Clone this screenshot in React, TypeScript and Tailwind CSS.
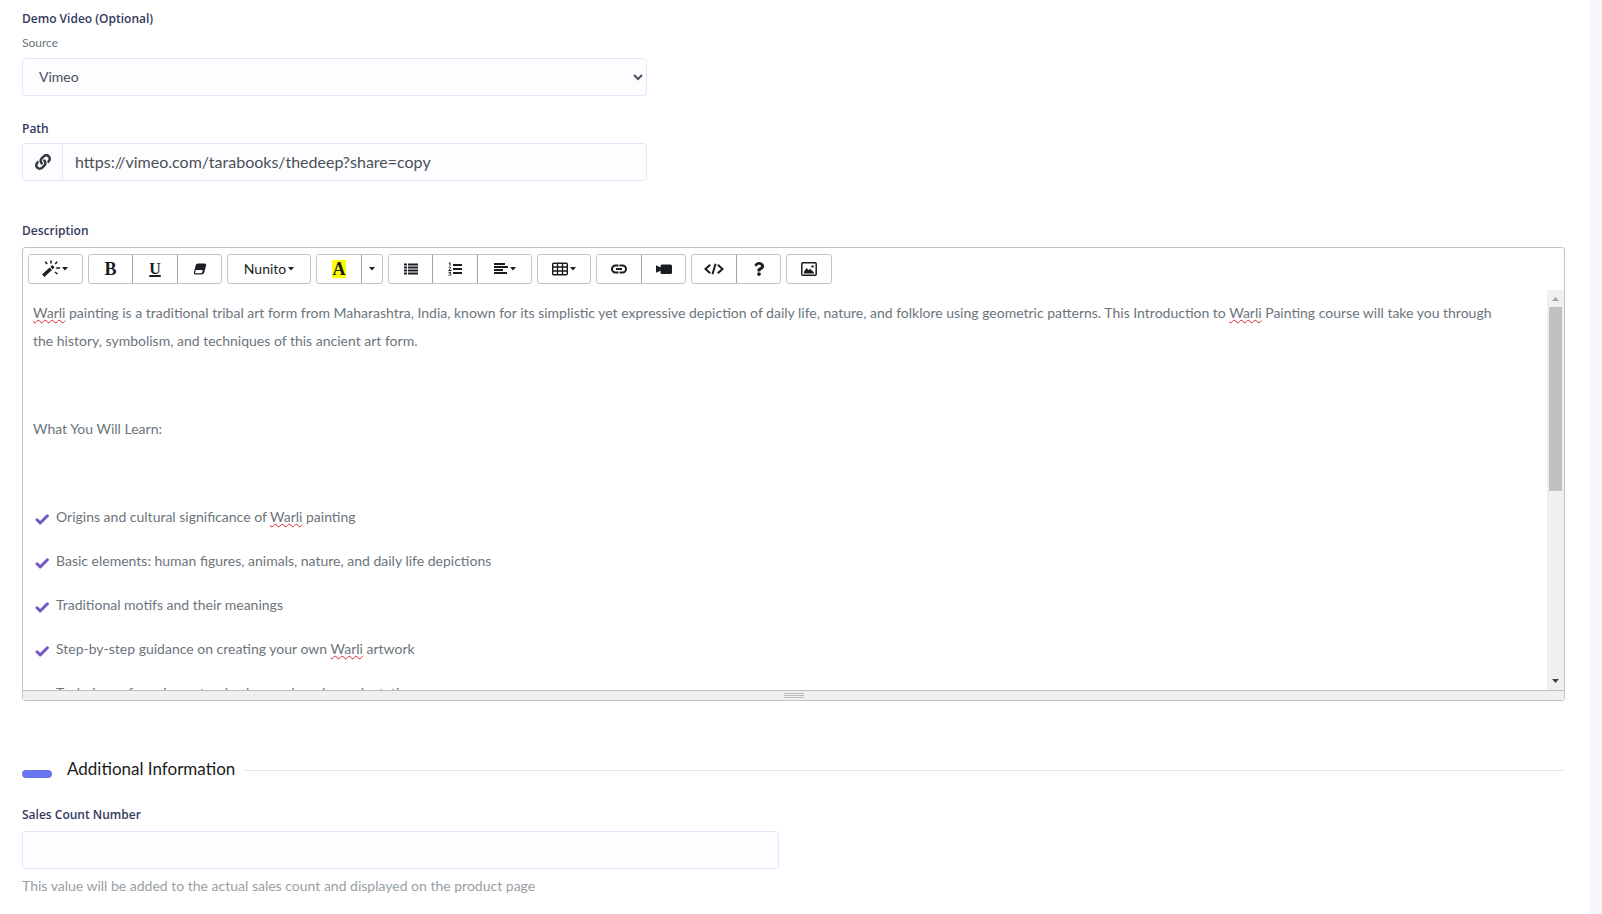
import { useState, type ReactNode } from "react";
import { FaLink, FaQuestion } from "react-icons/fa";

const learningPoints: ReactNode[] = [
  <>
    Origins and cultural significance of <Misspelled>Warli</Misspelled> painting
  </>,
  <>Basic elements: human figures, animals, nature, and daily life depictions</>,
  <>Traditional motifs and their meanings</>,
  <>
    Step-by-step guidance on creating your own <Misspelled>Warli</Misspelled> artwork
  </>,
  <>Techniques for using natural colors and modern adaptations</>,
];

function Misspelled({ children }: { children: ReactNode }) {
  return (
    <span className="underline decoration-[#d8232a] decoration-wavy decoration-1 underline-offset-1">
      {children}
    </span>
  );
}

function Caret() {
  return (
    <svg aria-hidden="true" className="h-1 w-1.5 shrink-0" viewBox="0 0 6 4">
      <path d="M0 0h6L3 3.5z" fill="currentColor" />
    </svg>
  );
}

function MagicIcon() {
  return (
    <svg aria-hidden="true" className="-ml-0.5 h-[18px] w-[18px]" viewBox="0 0 18 18" stroke="currentColor">
      <path d="m1.2 15.8 7.6-7" strokeWidth="3.4" />
      <path d="m9.6 8 1.8-1.7" strokeWidth="3.4" />
      <path
        d="M9 .5v3M3.2 1.8l2 2.2M15.2 1.8l-2 2.2M14.2 8H18M13 12l2.400 2"
        strokeWidth="1.6"
      />
    </svg>
  );
}

function EraserIcon() {
  return (
    <svg aria-hidden="true" className="h-3.5 w-3.5" viewBox="0 0 14 14" fill="currentColor">
      <path
        fillRule="evenodd"
        d="M5 1.5h6.4c1.3 0 2 .9 1.7 2l-1.8 6.8c-.3 1.3-1.3 2.2-2.5 2.2H2.6c-1.3 0-2-.9-1.7-2l1.7-6.8C3 2.4 3.9 1.5 5 1.5ZM2.8 8l-.7 2.7c-.1.3.1.6.5.6h5.6c.5 0 .8-.2.9-.7L9.8 8z"
      />
    </svg>
  );
}

function BulletListIcon() {
  return (
    <svg aria-hidden="true" className="h-3.5 w-3.5" viewBox="0 0 14 14" fill="currentColor">
      <path d="M0 1.5h3v2H0zM0 4.5h3v2H0zM0 7.5h3v2H0zM0 10.5h3v2H0zM4 1.5h10v2H4zM4 4.5h10v2H4zM4 7.5h10v2H4zM4 10.5h10v2H4z" />
    </svg>
  );
}

function NumberListIcon() {
  return (
    <svg aria-hidden="true" className="h-3.5 w-3.5" viewBox="0 0 14 14">
      <path d="M5 2h9v2H5zM5 6h9v2H5zM5 10h9v2H5z" fill="currentColor" />
      <path
        d="M.8 1.3 2 .7v3.4M.5 5.6c1.4-1 3 0 1.8 1.2L.7 8.5h2.600M.6 10.3h2.300L1.7 11.5c1.9 0 1.5 2-.1 1.9L.5 13"
        fill="none"
        stroke="currentColor"
      />
    </svg>
  );
}

function AlignIcon() {
  return (
    <svg aria-hidden="true" className="h-3 w-3.5" viewBox="0 0 14 12" fill="currentColor">
      <path d="M0 0h11v2H0zM0 3h14v2H0zM0 6h9v2H0zM0 9h13v2H0z" />
    </svg>
  );
}

function TableIcon() {
  return (
    <svg aria-hidden="true" className="h-3.5 w-4" viewBox="0 0 16 14">
      <rect x=".7" y="1.2" width="14.6" height="11.6" rx="1" fill="none" stroke="currentColor" strokeWidth="1.4" />
      <path d="M5.5 1v12M10.5 1v12M1 5h14M1 9h14" stroke="currentColor" strokeWidth="1.4" />
    </svg>
  );
}

function ChainIcon() {
  return (
    <svg aria-hidden="true" className="h-3 w-4" viewBox="0 0 16 12" fill="none" stroke="currentColor" strokeWidth="2">
      <path d="M7.5 2.5h-3a3.5 3.5 0 0 0 0 7h3M8.5 2.5h3a3.5 3.5 0 0 1 0 7h-3M5 6h6" />
    </svg>
  );
}

function VideoIcon() {
  return (
    <svg aria-hidden="true" className="h-3 w-4" viewBox="0 0 16 12" fill="currentColor">
      <path d="m0 2.2 5 2.6v2.6L0 9.8z" />
      <rect x="4.5" y="1.5" width="11.5" height="9.5" rx="1.5" />
    </svg>
  );
}

function CodeIcon() {
  return (
    <svg aria-hidden="true" className="h-3.5 w-5" viewBox="0 0 20 14" fill="none" stroke="currentColor" strokeWidth="2">
      <path d="M6.2 2.8 1.5 7l4.7 4.2M13.8 2.8 18.5 7l-4.7 4.2M11.6 1.8 8.4 12.2" />
    </svg>
  );
}

function PictureIcon() {
  return (
    <svg aria-hidden="true" className="h-3.5 w-4" viewBox="0 0 16 14">
      <rect x=".8" y=".8" width="14.4" height="12.4" rx="1" fill="none" stroke="currentColor" strokeWidth="1.5" />
      <path d="M3 11.5V9.8L5.6 6l2 2.3L9 6.8l3.9 3.5v1.2z" fill="currentColor" />
      <circle cx="11.6" cy="4.4" r="1.2" fill="currentColor" />
    </svg>
  );
}

function CheckIcon() {
  return (
    <svg aria-hidden="true" className="mt-1 ml-0.5 h-3.5 w-3.5 shrink-0" viewBox="0 0 14 14" fill="none">
      <path
        d="m2 7.8 3.2 3.2 7.2-7.2"
        stroke="#7159c1"
        strokeLinecap="round"
        strokeLinejoin="round"
        strokeWidth="3"
      />
    </svg>
  );
}

function ToolGroup({ children }: { children: ReactNode }) {
  return (
    <div className="flex divide-x divide-[#a3a3a3] rounded-[3px] border border-[#c4c4c4] bg-white">
      {children}
    </div>
  );
}

function Tool({
  label,
  className = "w-11",
  children,
}: {
  label: string;
  className?: string;
  children: ReactNode;
}) {
  return (
    <button
      aria-label={label}
      className={`box-content flex h-7 items-center justify-center gap-0.5 text-[#191d21] hover:bg-gray-100 ${className}`}
      type="button"
    >
      {children}
    </button>
  );
}

function Toolbar() {
  return (
    <div aria-label="Formatting" className="flex flex-wrap gap-[5px] px-[5px] py-1.5" role="toolbar">
      <ToolGroup>
        <Tool className="w-[53px]" label="Style">
          <MagicIcon />
          <Caret />
        </Tool>
      </ToolGroup>
      <ToolGroup>
        <Tool className="w-[43px]" label="Bold">
          <span className="font-['Liberation_Serif',serif] text-lg leading-5 font-bold">B</span>
        </Tool>
        <Tool label="Underline">
          <span className="font-['Liberation_Serif',serif] text-base leading-5 font-bold underline decoration-2 underline-offset-1">
            U
          </span>
        </Tool>
        <Tool className="w-[43px]" label="Remove Font Style">
          <EraserIcon />
        </Tool>
      </ToolGroup>
      <ToolGroup>
        <Tool className="w-[82px]" label="Font Family">
          <span className="text-sm">Nunito</span>
          <Caret />
        </Tool>
      </ToolGroup>
      <ToolGroup>
        <Tool label="Recent Color">
          <span className="flex h-[18px] w-3.5 items-center justify-center bg-[#ffff00] font-['Liberation_Serif',serif] text-lg font-bold">
            A
          </span>
        </Tool>
        <Tool className="w-5" label="More Color">
          <Caret />
        </Tool>
      </ToolGroup>
      <ToolGroup>
        <Tool className="w-[43px]" label="Unordered list">
          <BulletListIcon />
        </Tool>
        <Tool label="Ordered list">
          <NumberListIcon />
        </Tool>
        <Tool className="w-[53px]" label="Paragraph">
          <AlignIcon />
          <Caret />
        </Tool>
      </ToolGroup>
      <ToolGroup>
        <Tool className="w-[52px]" label="Table">
          <TableIcon />
          <Caret />
        </Tool>
      </ToolGroup>
      <ToolGroup>
        <Tool label="Link">
          <ChainIcon />
        </Tool>
        <Tool className="w-[43px]" label="Video">
          <VideoIcon />
        </Tool>
      </ToolGroup>
      <ToolGroup>
        <Tool label="Code View">
          <CodeIcon />
        </Tool>
        <Tool className="w-[43px]" label="Help">
          <FaQuestion className="size-3.5" />
        </Tool>
      </ToolGroup>
      <ToolGroup>
        <Tool label="File Manager">
          <PictureIcon />
        </Tool>
      </ToolGroup>
    </div>
  );
}

function ScrollTrack() {
  return (
    <div aria-hidden="true" className="flex w-[17px] shrink-0 flex-col items-center bg-[#f0f0f0]">
      <svg className="h-[17px] w-[17px] shrink-0" viewBox="0 0 17 17">
        <path d="M5 11h7L8.5 7z" fill="#a3a3a3" />
      </svg>
      <div className="h-[184px] w-[13px] bg-[#c1c1c1]" />
      <svg className="mt-auto h-[17px] w-[17px] shrink-0" viewBox="0 0 17 17">
        <path d="M5 6h7l-3.5 4z" fill="#424242" />
      </svg>
    </div>
  );
}

function Editor() {
  return (
    <div className="rounded-[3px] border border-[#c4c4c4]">
      <Toolbar />
      <div className="flex h-[400px]">
        <div
          aria-labelledby="description-label"
          aria-multiline="true"
          className="min-w-0 flex-1 space-y-4 overflow-hidden px-2.5 pt-[9px] text-sm leading-7 text-[#6c757d] outline-none"
          contentEditable
          role="textbox"
          spellCheck={false}
          suppressContentEditableWarning
        >
          <p>
            <Misspelled>Warli</Misspelled> painting is a traditional tribal art form from Maharashtra, India, known
            for its simplistic yet expressive depiction of daily life, nature, and folklore using geometric patterns.
            This Introduction to <Misspelled>Warli</Misspelled> Painting course will take you through
            <br />
            the history, symbolism, and techniques of this ancient art form.
          </p>
          <p>
            <br />
          </p>
          <p>What You Will Learn:</p>
          <p>
            <br />
          </p>
          {learningPoints.map((point, index) => (
            <p className="flex items-center gap-[7px]" key={index}>
              <CheckIcon />
              <span>{point}</span>
            </p>
          ))}
        </div>
        <ScrollTrack />
      </div>
      <div className="flex h-2.5 cursor-ns-resize flex-col items-center justify-center gap-px border-t border-[#bdbdbd] bg-[#f0f0f0]">
        <div className="h-px w-5 bg-[#bdbdbd]" />
        <div className="h-px w-5 bg-[#bdbdbd]" />
        <div className="h-px w-5 bg-[#bdbdbd]" />
      </div>
    </div>
  );
}

const labelClass = "block font-['Open_Sans',sans-serif] text-xs leading-5 font-semibold text-[#34395e]";

export default function App() {
  const [source, setSource] = useState("vimeo");
  const [path, setPath] = useState("https://vimeo.com/tarabooks/thedeep?share=copy");
  const [salesCount, setSalesCount] = useState("");

  return (
    <div className="min-h-screen bg-[#f4f6f9] pr-3 font-[Lato,sans-serif] text-[#6c757d]">
      <main className="min-h-screen bg-white pt-[9px] pr-[25px] pb-4 pl-[22px]">
        <div className="grid grid-cols-12 gap-x-[30px]">
          <fieldset className="col-span-5">
            <legend className={labelClass}>Demo Video (Optional)</legend>
            <label className="mt-1 block text-xs leading-5" htmlFor="source">
              Source
            </label>
            <select
              className="mt-[5px] block h-[38px] w-full rounded-[3px] border border-[#e4e6fc] bg-[#fdfdff] px-3 pb-0.5 text-sm text-[#495057]"
              id="source"
              onChange={(e) => setSource(e.target.value)}
              value={source}
            >
              <option value="upload">Upload</option>
              <option value="youtube">Youtube</option>
              <option value="vimeo">Vimeo</option>
            </select>
          </fieldset>
        </div>

        <div className="mt-[23px] grid grid-cols-12 gap-x-[30px]">
          <div className="col-span-5">
            <label className={labelClass} htmlFor="path">
              Path
            </label>
            <div className="mt-1 flex h-[38px] rounded-[3px] border border-[#e4e6fc] bg-[#fdfdff]">
              <span className="flex w-10 items-center justify-center border-r border-[#e4e6fc] text-[#343a40]">
                <FaLink className="size-4" />
              </span>
              <input
                className="min-w-0 flex-1 px-3 text-base text-[#495057] outline-none"
                id="path"
                onChange={(e) => setPath(e.target.value)}
                type="text"
                value={path}
              />
            </div>
          </div>
        </div>

        <div className="mt-10">
          <p className={labelClass} id="description-label">
            Description
          </p>
          <div className="mt-1.5">
            <Editor />
          </div>
        </div>

        <div className="mt-[58px] flex items-center">
          <span className="mt-2 h-2 w-[30px] rounded-full bg-[#6777ef]" />
          <h2 className="ml-[15px] pb-0.5 text-[17px] leading-5 text-[#191d21]">Additional Information</h2>
          <span className="ml-2 h-px flex-1 bg-[#e6e8ea]" />
        </div>

        <div className="mt-6 grid grid-cols-12 gap-x-[30px]">
          <div className="col-span-6">
            <label className={labelClass} htmlFor="sales-count">
              Sales Count Number
            </label>
            <input
              className="mt-1.5 block h-[38px] w-full rounded-[3px] border border-[#e4e6fc] bg-[#fdfdff] px-4 text-sm text-[#495057]"
              id="sales-count"
              onChange={(e) => setSalesCount(e.target.value)}
              type="text"
              value={salesCount}
            />
            <p className="mt-[7px] text-sm leading-5 text-[#98a0a6]">
              This value will be added to the actual sales count and displayed on the product page
            </p>
          </div>
        </div>
      </main>
    </div>
  );
}
